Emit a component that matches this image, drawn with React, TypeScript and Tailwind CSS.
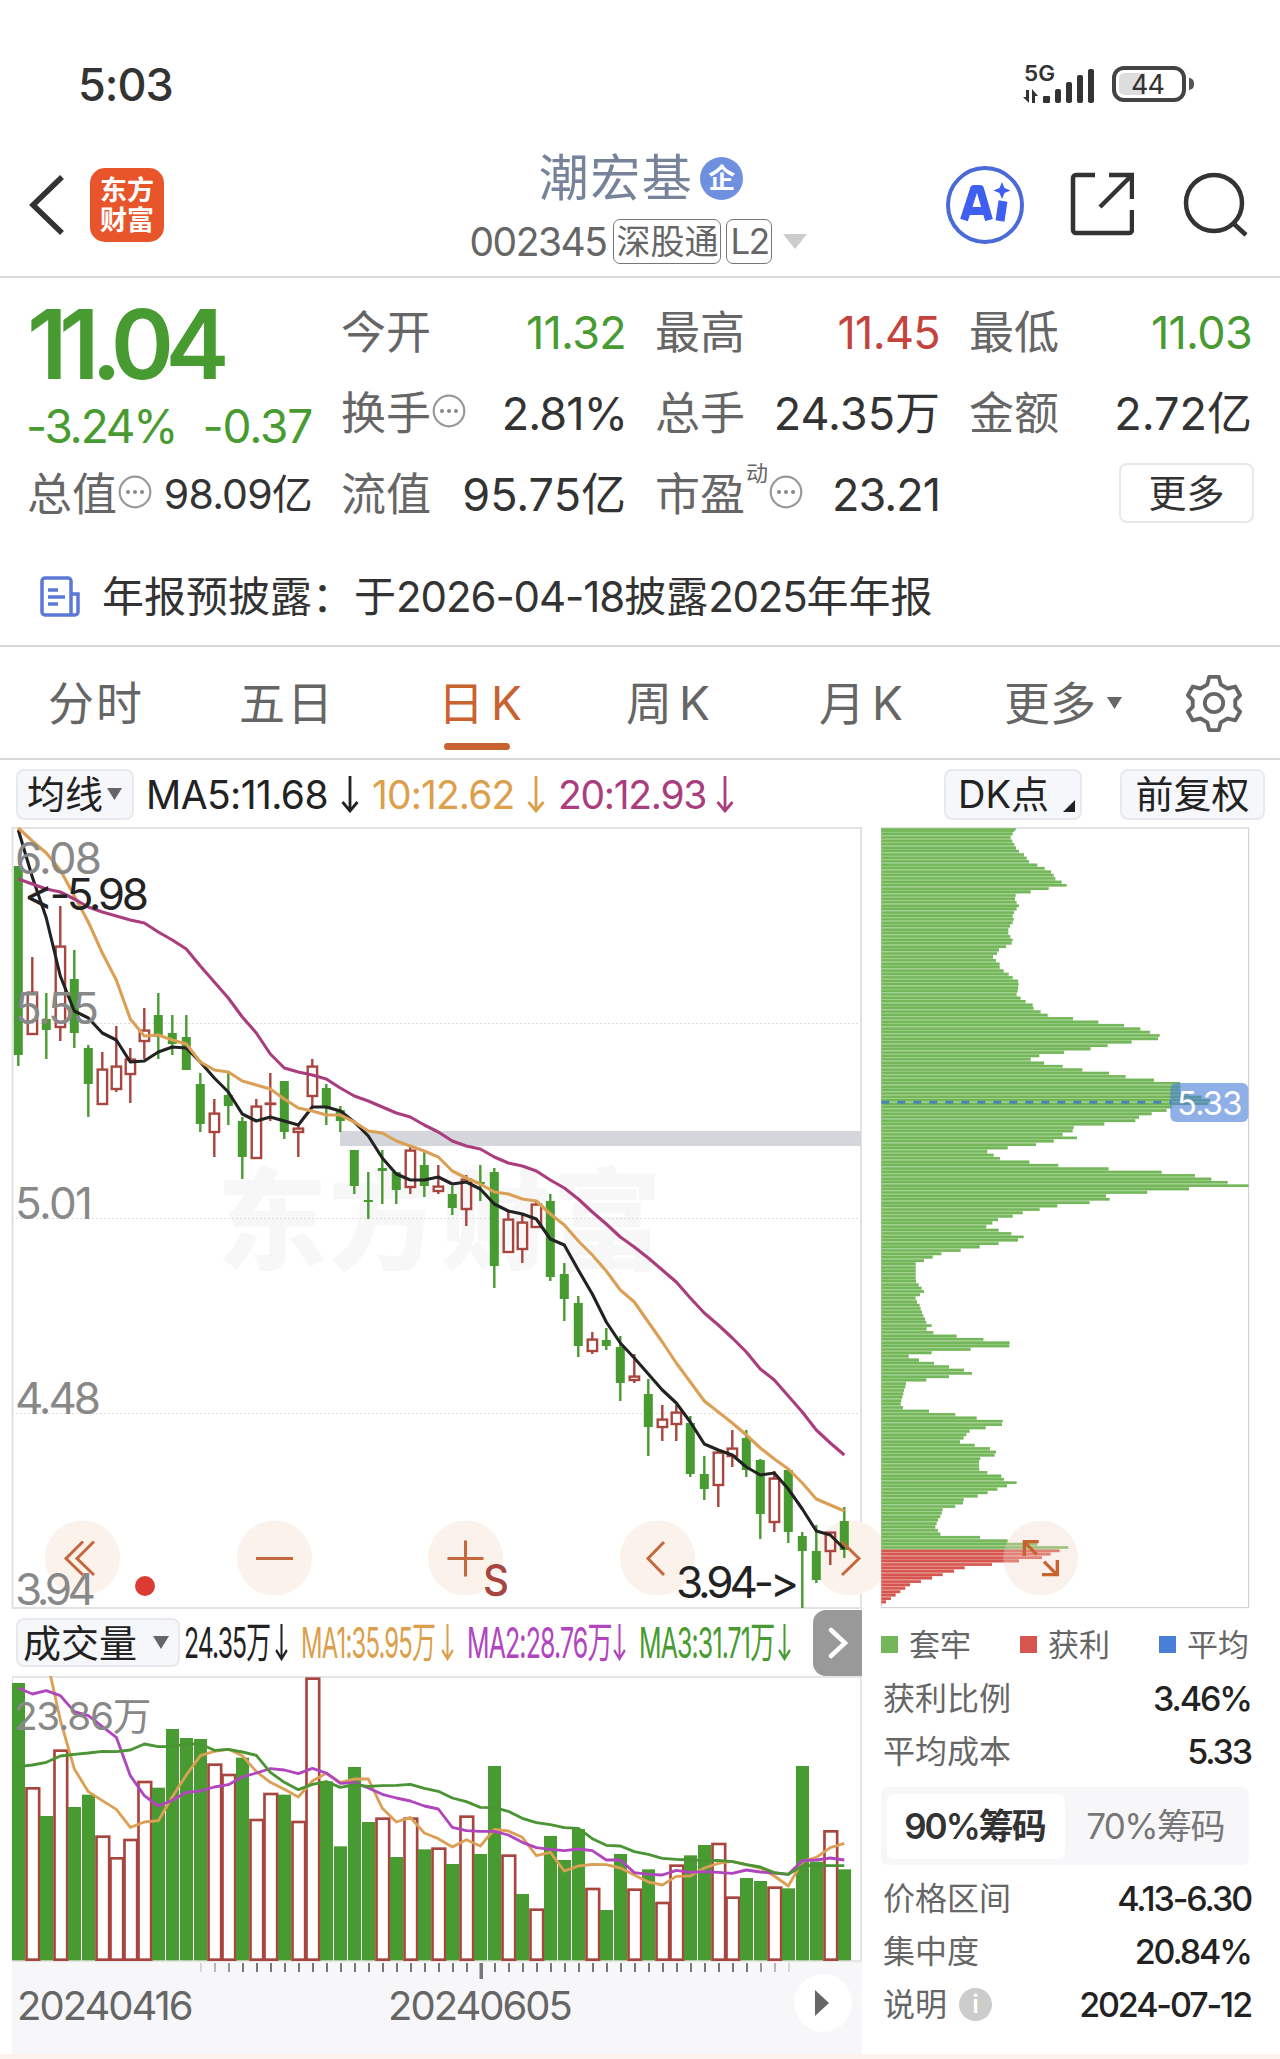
import type { ReactNode } from 'react';

const GREEN = '#489b31';
const RED = '#a8453f';

// [up, high, bodyTop, bodyBottom, low]
type Candle = [number, number, number, number, number];

const CANDLES: Candle[] = [
  [0, 866, 866, 1055, 1066], [1, 957, 992, 1034, 1034], [0, 993, 1019, 1030, 1059],
  [1, 906, 946, 1027, 1041], [0, 950, 979, 1033, 1048], [0, 1045, 1048, 1084, 1117],
  [1, 1052, 1069, 1104, 1104], [1, 1026, 1066, 1089, 1092], [1, 1048, 1059, 1074, 1103],
  [1, 1008, 1030, 1041, 1059], [0, 993, 1015, 1037, 1059], [0, 1015, 1033, 1044, 1055],
  [0, 1015, 1037, 1070, 1070], [0, 1073, 1084, 1124, 1132], [1, 1099, 1113, 1132, 1157],
  [0, 1072, 1095, 1106, 1125], [0, 1117, 1121, 1157, 1179], [1, 1099, 1106, 1158, 1158],
  [1, 1073, 1103, 1103, 1121], [0, 1081, 1081, 1132, 1139], [1, 1125, 1128, 1132, 1157],
  [1, 1059, 1066, 1096, 1107], [0, 1084, 1088, 1107, 1125], [0, 1106, 1110, 1121, 1132],
  [0, 1150, 1150, 1186, 1194], [0, 1172, 1200, 1202, 1219], [0, 1150, 1168, 1171, 1204],
  [0, 1172, 1172, 1190, 1204], [1, 1147, 1150, 1187, 1194], [0, 1152, 1165, 1186, 1197],
  [1, 1165, 1186, 1191, 1194], [0, 1186, 1194, 1208, 1215], [1, 1175, 1179, 1209, 1226],
  [0, 1165, 1182, 1184, 1201], [0, 1168, 1172, 1266, 1288], [1, 1212, 1219, 1252, 1252],
  [1, 1215, 1222, 1249, 1263], [1, 1201, 1204, 1227, 1227], [0, 1194, 1201, 1277, 1281],
  [0, 1263, 1274, 1299, 1321], [0, 1296, 1303, 1346, 1357], [1, 1332, 1339, 1351, 1354],
  [0, 1328, 1340, 1346, 1350], [0, 1336, 1347, 1383, 1401], [1, 1354, 1376, 1380, 1383],
  [0, 1379, 1394, 1427, 1456], [1, 1405, 1419, 1427, 1441], [1, 1405, 1412, 1424, 1441],
  [0, 1416, 1423, 1474, 1477], [0, 1456, 1474, 1489, 1500], [1, 1449, 1452, 1485, 1507],
  [1, 1430, 1448, 1456, 1467], [0, 1430, 1438, 1470, 1477], [0, 1459, 1460, 1514, 1539],
  [1, 1471, 1478, 1522, 1532], [0, 1468, 1470, 1532, 1543], [0, 1532, 1536, 1551, 1608],
  [0, 1525, 1551, 1580, 1583], [1, 1532, 1532, 1551, 1565], [0, 1507, 1521, 1550, 1558],
];

const MA5 = [
  830, 877, 918, 976, 1011, 1018, 1033, 1040, 1062, 1061, 1052, 1047, 1048, 1062, 1078, 1092, 1114,
  1121, 1117, 1121, 1125, 1107, 1107, 1111, 1122, 1136, 1158, 1174, 1180, 1180, 1177, 1184, 1182,
  1189, 1204, 1211, 1214, 1219, 1239, 1245, 1270, 1294, 1322, 1343, 1358, 1374, 1390, 1403, 1422,
  1444, 1450, 1455, 1467, 1475, 1473, 1489, 1509, 1531, 1535, 1549,
];
const MA10 = [
  828, 841, 853, 870, 896, 922, 953, 980, 1019, 1036, 1035, 1040, 1044, 1062, 1070, 1072, 1081,
  1085, 1089, 1099, 1108, 1111, 1115, 1115, 1122, 1131, 1133, 1141, 1146, 1151, 1157, 1171, 1178,
  1184, 1192, 1194, 1199, 1201, 1214, 1225, 1241, 1255, 1271, 1290, 1302, 1322, 1342, 1363, 1382,
  1401, 1412, 1423, 1435, 1448, 1459, 1469, 1483, 1499, 1505, 1511,
];
const MA20 = [
  879, 884, 889, 892, 899, 907, 912, 916, 920, 923, 932, 940, 949, 966, 982, 998, 1017, 1033, 1054,
  1068, 1072, 1075, 1079, 1088, 1096, 1101, 1107, 1113, 1117, 1125, 1132, 1141, 1146, 1149, 1157,
  1163, 1166, 1171, 1180, 1188, 1199, 1212, 1224, 1237, 1247, 1258, 1270, 1282, 1298, 1313, 1325,
  1338, 1352, 1369, 1380, 1396, 1412, 1430, 1443, 1455,
];

const VOLUME_TOPS = [
  189, 501, 588, 388, 561, 524, 646, 711, 656, 482, 503, 327, 354, 357, 430, 461, 413, 596, 518,
  524, 602, 172, 484, 679, 441, 606, 592, 711, 592, 688, 682, 732, 586, 702, 438, 703, 822, 865,
  648, 720, 627, 803, 870, 702, 805, 748, 845, 733, 706, 675, 668, 829, 774, 783, 799, 805, 438,
  725, 630, 748,
];
const VOLUME_UP = [
  1, 3, 6, 7, 8, 9, 14, 15, 17, 18, 20, 21, 26, 28, 30, 32, 35, 37, 41, 44, 46, 47, 50, 51, 54, 58,
];
const VOL_MA1 = [
  -300, -100, 110, 300, 447, 515, 542, 568, 622, 606, 602, 530, 465, 407, 394, 388, 407, 455, 487,
  508, 531, 483, 460, 487, 477, 477, 565, 606, 592, 639, 656, 681, 659, 678, 628, 633, 652, 707,
  697, 753, 738, 733, 734, 744, 765, 786, 795, 769, 768, 744, 730, 724, 734, 744, 768, 798, 725,
  712, 683, 670,
];
const VOL_MA2 = [
  204, 222, 212, 227, 275, 287, 320, 352, 467, 527, 558, 541, 517, 513, 501, 494, 471, 459, 446,
  450, 461, 445, 459, 490, 488, 504, 523, 534, 543, 558, 567, 622, 632, 634, 634, 645, 667, 683,
  688, 692, 687, 692, 720, 720, 758, 763, 765, 751, 757, 755, 757, 760, 750, 756, 759, 763, 722,
  720, 714, 720,
];
const VOL_MA3 = [
  440, 435, 427, 408, 403, 399, 394, 395, 390, 372, 380, 380, 372, 372, 391, 388, 396, 406, 457,
  487, 509, 493, 485, 502, 494, 499, 497, 496, 493, 505, 514, 534, 545, 562, 563, 574, 595, 608,
  614, 623, 625, 656, 676, 678, 695, 703, 715, 718, 720, 722, 721, 725, 734, 741, 758, 763, 738,
  736, 737, 737,
];

// right edge of every price level, from the highest price down
const CHIP_LEFT = 34;
const CHIP_FIRST_PROFIT = 212;
const CHIPS = [
  437, 432, 428, 422, 427, 433, 438, 447, 462, 470, 477, 502, 524, 543, 551, 556, 575, 590, 536,
  482, 437, 435, 440, 447, 440, 432, 428, 431, 428, 420, 415, 415, 421, 428, 425, 408, 387, 381,
  369, 378, 389, 389, 401, 416, 428, 444, 446, 444, 443, 440, 452, 467, 488, 491, 512, 533, 609,
  685, 762, 811, 840, 869, 864, 785, 713, 662, 582, 508, 482, 522, 578, 637, 717, 767, 852, 931,
  931, 931, 957, 995, 1020, 1015, 905, 890, 845, 807, 796, 703, 611, 608, 578, 621, 551, 498, 413,
  352, 371, 390, 478, 565, 716, 875, 975, 1024, 1073, 1136, 957, 832, 708, 719, 659, 562, 509, 458,
  428, 384, 367, 349, 386, 424, 461, 444, 386, 329, 272, 214, 188, 162, 137, 137, 137, 137, 137,
  138, 146, 155, 162, 150, 137, 141, 149, 152, 156, 160, 165, 169, 185, 170, 190, 260, 340, 419,
  418, 302, 185, 116, 147, 192, 237, 282, 306, 237, 169, 108, 106, 102, 100, 97, 94, 92, 99, 177,
  256, 320, 398, 396, 347, 299, 289, 281, 270, 314, 360, 378, 374, 331, 327, 327, 328, 352, 394,
  402, 440, 411, 382, 353, 323, 281, 279, 256, 218, 215, 211, 204, 200, 196, 204, 211, 330, 413,
  502, 595, 569, 542, 516, 447, 366, 284, 252, 218, 186, 153, 120, 106, 91, 77, 63, 48,
];

const priceX = (i: number) => 18.3 + 14 * i;
const volumeX = (i: number) => 55 + 42 * i;

const toPoints = (values: number[], x: (i: number) => number) =>
  values.map((y, i) => `${x(i)},${y}`).join(' ');

const Triangle = ({ className }: { className: string }) => (
  <svg viewBox="0 0 16 12" preserveAspectRatio="none" className={className}>
    <path d="M0 0h16L8 12z" fill="currentColor" />
  </svg>
);

const ArrowDown = ({ className = 'w-[18px]' }: { className?: string }) => (
  <svg
    viewBox="0 0 18 37"
    preserveAspectRatio="none"
    className={`h-[37px] shrink-0 ${className}`}
    fill="none"
    stroke="currentColor"
    strokeWidth="2.8"
  >
    <path d="M9 0v34M1.5 26 9 35l7.5-9" />
  </svg>
);

const MoreDots = () => (
  <svg viewBox="0 0 34 34" className="-mt-[6px] ml-px h-[34px] w-[34px] shrink-0">
    <circle cx="17" cy="17" r="15.3" fill="none" stroke="#999" strokeWidth="2.2" />
    <circle cx="10" cy="17" r="2" fill="#888" />
    <circle cx="17" cy="17" r="2" fill="#888" />
    <circle cx="24" cy="17" r="2" fill="#888" />
  </svg>
);

const StatusBar = () => (
  <div className="flex h-[140px] items-start justify-between pl-[78px] pr-[86px] text-[#333]">
    <div className="mt-[62px] text-[45px] font-medium tracking-[-1px]">5:03</div>
    <div className="mt-[63px] flex items-center">
      <svg viewBox="0 0 72 42" className="h-[42px] w-[72px] overflow-visible" fill="#333">
        <text x="1" y="18" fontSize="22" fontWeight="600" textLength="31" lengthAdjust="spacingAndGlyphs">
          5G
        </text>
        <path d="M3 27h3v13L0 34h3zM9 40h3V33l3 0-6-7z" />
        <rect x="20" y="33" width="7" height="7" rx="1" />
        <rect x="32" y="26" width="6" height="14" rx="2" />
        <rect x="43" y="19" width="6" height="21" rx="2" />
        <rect x="54" y="12" width="6" height="28" rx="2" />
        <rect x="65" y="6" width="6" height="34" rx="2" />
      </svg>
      <div className="ml-[17px] flex h-[36px] w-[74px] items-center rounded-[12px] border-[4px] border-[#444] p-[3px]">
        <div className="flex h-full w-[26px] items-center rounded-l-[5px] bg-[#ddd] pl-[12px] text-[27px] tracking-[-1px]">
          44
        </div>
      </div>
      <div className="ml-[3px] h-[12px] w-[5px] rounded-r-full bg-[#555]" />
    </div>
  </div>
);

const Header = () => (
  <div className="flex h-[138px] justify-between border-b-2 border-[#d8d8d8] pl-[28px] pr-[31px]">
    <div className="flex w-[400px] pt-[28px]">
      <svg viewBox="0 0 38 60" className="mt-[7px] h-[60px] w-[38px]" fill="none" stroke="#333" strokeWidth="5.5">
        <path d="M34 2 5 30l29 28" />
      </svg>
      <div className="ml-[24px] flex h-[74px] w-[74px] flex-col items-center justify-center gap-[3px] rounded-[15px] bg-[#e8552b] text-[27px] font-bold text-white">
        <span>东方</span>
        <span>财富</span>
      </div>
    </div>
    <div className="flex flex-col items-center pt-[13px]">
      <div className="flex items-center pl-[5px] text-[50px] tracking-[1.500px] text-[#76839a]">
        潮宏基
        <span className="ml-[7px] flex h-[43px] w-[43px] items-center justify-center rounded-full bg-[#6f8fdf] text-[27px] font-bold tracking-normal text-white">
          企
        </span>
      </div>
      <div className="mt-[16px] flex items-center text-[39px] text-[#666]">
        <span className="mr-[7px] tracking-[-1.500px]">002345</span>
        <span className="flex h-[45px] w-[108px] items-center justify-center rounded-[7px] border-[1.5px] border-[#777] text-[34px]">
          深股通
        </span>
        <span className="ml-[5px] flex h-[45px] w-[46px] items-center justify-center rounded-[7px] border-[1.5px] border-[#777] text-[35px] tracking-[-1.500px]">
          L2
        </span>
        <Triangle className="ml-[11px] h-[15px] w-[24px] text-[#ccc]" />
      </div>
    </div>
    <div className="flex w-[400px] justify-end pt-[25px]">
      <svg viewBox="0 0 80 80" className="h-[80px] w-[80px]">
        <circle cx="40" cy="40" r="37" fill="none" stroke="#4a6ad8" strokeWidth="4" />
        <path
          d="M19 55 29 24h6l9 31M22 46h17"
          fill="none"
          stroke="#3f5ff0"
          strokeWidth="8"
          strokeLinejoin="round"
        />
        <path d="M58 36l-3 20" stroke="#3f5ff0" strokeWidth="9" />
        <path d="m57 17 2.500 6 6 2.500-6 2.500-2.500 6-2.500-6-6-2.500 6-2.500z" fill="#3f5ff0" />
      </svg>
      <svg viewBox="0 0 64 64" className="ml-[45px] mt-[7px] h-[64px] w-[64px]" fill="none" stroke="#333" strokeWidth="4.5">
        <path d="M25 3H6a3 3 0 0 0-3 3v52a3 3 0 0 0 3 3h53a3 3 0 0 0 3-3V38" />
        <path d="M39 3h23v24M61 4 30 35" />
      </svg>
      <svg viewBox="0 0 66 66" className="ml-[49px] mt-[7px] h-[66px] w-[66px]" fill="none" stroke="#333" strokeWidth="4.5">
        <circle cx="31" cy="31" r="28" />
        <path d="m50 51 13 12" />
      </svg>
    </div>
  </div>
);

interface QuoteItemProps {
  label: ReactNode;
  value: string;
  className?: string;
}

const QuoteItem = ({ label, value, className = 'text-[#333]' }: QuoteItemProps) => (
  <div className="flex items-center justify-between whitespace-nowrap">
    <div className="flex items-center text-[45px] text-[#666]">{label}</div>
    <div className={`text-[45px] ${className}`}>{value}</div>
  </div>
);

const Quote = () => (
  <div className="grid h-[256px] grid-cols-[285px_285px_285px_283px] grid-rows-[81px_81px_81px] gap-x-[29px] pl-[27px] pt-[14px]">
    <div className="row-span-2 whitespace-nowrap text-[#489b31]">
      <div className="mt-[4px] text-[96px] font-semibold tracking-[-8.500px]">11.04</div>
      <div className="-ml-px mt-[11px] flex justify-between text-[46px] tracking-[-2.200px]">
        <span>-3.24%</span>
        <span className="tracking-[-1.200px]">-0.37</span>
      </div>
    </div>
    <QuoteItem label="今开" value="11.32" className="tracking-[-0.700px] text-[#489b31]" />
    <QuoteItem label="最高" value="11.45" className="tracking-[-0.700px] text-[#c4433c]" />
    <QuoteItem label="最低" value="11.03" className="tracking-[-0.700px] text-[#489b31]" />
    <QuoteItem label={<>换手<MoreDots /></>} value="2.81%" className="-mr-px tracking-[-0.900px] text-[#333]" />
    <QuoteItem label="总手" value="24.35万" />
    <QuoteItem label="金额" value="2.72亿" />
    <div className="flex items-center justify-between whitespace-nowrap">
      <div className="flex items-center text-[45px] text-[#666]">
        总值
        <MoreDots />
      </div>
      <div className="text-[41px] tracking-[-0.800px] text-[#333]">98.09亿</div>
    </div>
    <QuoteItem label="流值" value="95.75亿" />
    <QuoteItem
      label={
        <>
          市盈
          <span className="-mt-[44px] ml-px text-[22px]">动</span>
          <MoreDots />
        </>
      }
      value="23.21"
      className="tracking-[-1px] text-[#333]"
    />
    <div className="flex items-center justify-end">
      <div className="-mr-[2px] -mt-[4px] flex h-[60px] w-[135px] items-center justify-center rounded-[8px] border-2 border-[#e8e8e8] text-[38px] text-[#333]">
        更多
      </div>
    </div>
  </div>
);

const Notice = () => (
  <div className="flex h-[113px] items-center whitespace-nowrap border-b-2 border-[#d8d8d8] pl-[40px] pt-[15px] text-[42px] text-[#333]">
    <svg viewBox="0 0 40 42" className="mr-[22px] h-[42px] w-[40px]" fill="none" stroke="#5b78d6" strokeWidth="3.5">
      <path d="M31 38V5a3 3 0 0 0-3-3H5a3 3 0 0 0-3 3v31a3 3 0 0 0 3 3h30a3 3 0 0 0 3-3V18h-7" />
      <path d="M8 14h10M8 21h17M8 28h10" />
    </svg>
    年报预披露：于
    <span className="tracking-[-1.100px]">2026-04-18</span>
    披露
    <span className="tracking-[-1.200px]">2025</span>
    年年报
  </div>
);

const TABS = [
  { label: '分时', width: 'w-[191px]', tracking: 'tracking-[2px]' },
  { label: '五日', width: 'w-[199px]', tracking: 'tracking-[2px]' },
  { label: '日K', width: 'w-[188px]', tracking: 'tracking-[7px]', active: true },
  { label: '周K', width: 'w-[193px]', tracking: 'tracking-[7px]' },
  { label: '月K', width: 'w-[185px]', tracking: 'tracking-[7px]' },
];

const Tabs = () => (
  <div className="flex h-[113px] border-b-2 border-[#d8d8d8] pl-[48px] pt-[33px] text-[46px] text-[#666]">
    {TABS.map(({ label, width, tracking, active }) => (
      <div key={label} className={`${width} shrink-0`}>
        <div className={`inline-flex flex-col items-center ${tracking} ${active ? 'text-[#c8622f]' : ''}`}>
          {label}
          {active && <div className="mr-[12px] mt-[17px] h-[7px] w-[66px] rounded-full bg-[#c8622f]" />}
        </div>
      </div>
    ))}
    <div className="flex h-[46px] items-center">
      更多
      <Triangle className="ml-[11px] h-[12px] w-[15px]" />
    </div>
    <svg viewBox="0 0 60 60" className="-mt-[6px] ml-[62px] h-[58px] w-[60px]" fill="none" stroke="#666" strokeWidth="4">
      <path
        d="M25 3h10l2 8 7 4 8-2 5 9-5 5v7l5 5-5 9-8-2-7 4-2 8H25l-2-8-7-4-8 2-5-9 5-5v-7l-5-5 5-9 8 2 7-4z"
        strokeLinejoin="round"
      />
      <circle cx="30" cy="30" r="9.5" />
    </svg>
  </div>
);

const pill = 'flex items-center rounded-[8px] border-2 border-[#e8e9ec] bg-[#f6f7fa] text-[#222]';

const AverageBar = () => (
  <div className="flex h-[68px] items-center pl-[16px] pr-[15px] text-[39px] tracking-[-0.900px]">
    <div className={`${pill} h-[51px] w-[118px] pl-[9px] text-[38px] tracking-normal`}>
      均线
      <Triangle className="ml-[4px] h-[12px] w-[15px] text-[#666]" />
    </div>
    <div className="ml-[12px] flex w-[226px] items-center justify-between pr-[13px] tracking-[-0.600px] text-[#222]">
      MA5:11.68
      <ArrowDown />
    </div>
    <div className="flex w-[186px] items-center justify-between pr-[13px] text-[#dc9f4c]">
      10:12.62
      <ArrowDown />
    </div>
    <div className="flex w-[176px] items-center justify-between tracking-[-1.300px] text-[#a93d7e]">
      20:12.93
      <ArrowDown />
    </div>
    <div className={`${pill} relative ml-auto h-[51px] w-[138px] pl-[12px] text-[38px] tracking-normal`}>
      DK点
      <svg viewBox="0 0 12 12" className="absolute bottom-[6px] right-[5px] h-[12px] w-[12px]">
        <path d="M12 0v12H0z" fill="#222" />
      </svg>
    </div>
    <div className={`${pill} ml-[38px] h-[51px] w-[145px] justify-center text-[38px] tracking-normal`}>前复权</div>
  </div>
);

const PRICE_LABELS = [
  { text: '6.08', y: 874, width: 87 },
  { text: '5.55', y: 1024, width: 84 },
  { text: '5.01', y: 1219, width: 78 },
  { text: '4.48', y: 1414, width: 86 },
  { text: '3.94', y: 1605, width: 81 },
];

const CONTROLS = [
  { cx: 82.5, d: 'M83 1541.500 66 1558.500 83 1575M94 1541.500 77 1558.500 94 1575' },
  { cx: 274.5, d: 'M256 1558.500h37' },
  { cx: 465.5, d: 'M447.500 1558.500h36M465.500 1540.500v36' },
  { cx: 657.5, d: 'M664 1542 648 1558.500 664 1575' },
  { cx: 850.5, d: 'M842 1542 859 1558.500 842 1575' },
];

const PriceChart = () => (
  <svg
    viewBox="12 827 850 782"
    className="h-[782px] w-[850px] shrink-0 overflow-visible [font-feature-settings:'calt'_0]"
  >
    <rect x="12.500" y="828" width="848.500" height="780" fill="none" stroke="#e2e2e2" strokeWidth="2" />
    <text
      x="217"
      y="1261"
      fontSize="110"
      fontWeight="900"
      fill="#f7f7f7"
      textLength="445"
    >
      东方财富
    </text>
    {[1023.5, 1218.5, 1413.5].map((y) => (
      <line key={y} x1="12" x2="861" y1={y} y2={y} stroke="#ddd" strokeDasharray="2 2" />
    ))}
    {CONTROLS.map(({ cx }) => (
      <circle key={cx} cx={cx} cy="1558" r="37.500" fill="#fbf2ec" />
    ))}
    <rect x="340" y="1131" width="521" height="15" fill="#d5d6db" />
    {CANDLES.map(([up, high, top, bottom, low], i) => {
      const x = priceX(i);
      return up ? (
        <g key={i} fill="none" stroke={RED} strokeWidth="2.4">
          <path d={`M${x} ${high}V${top}M${x} ${bottom}V${low}`} />
          <rect x={x - 4.6} y={top + 0.6} width="9.400" height={Math.max(bottom - top - 0.6, 0.4)} />
        </g>
      ) : (
        <g key={i} fill={GREEN}>
          <rect x={x - 1.2} y={high} width="2.400" height={low - high} />
          <rect x={x - 4.5} y={top} width="9" height={bottom - top} />
        </g>
      );
    })}
    <g fill="none" strokeWidth="3.100" strokeLinejoin="round">
      <polyline points={toPoints(MA5, priceX)} stroke="#222" />
      <polyline points={toPoints(MA10, priceX)} stroke="#dba055" />
      <polyline points={toPoints(MA20, priceX)} stroke="#a93d7e" />
    </g>
    {CONTROLS.map(({ cx, d }) => (
      <path key={cx} d={d} fill="none" stroke="#c4693d" strokeWidth="3" />
    ))}
    <g fontSize="44" fill="#888">
      {PRICE_LABELS.map(({ text, y, width }) => (
        <text key={text} x="15" y={y} textLength={width}>
          {text}
        </text>
      ))}
    </g>
    <g fontSize="44" fill="#222">
      <text x="24" y="910" textLength="125">
        {'<-5.98'}
      </text>
      <text x="676" y="1598" textLength="123">
        {'3.94->'}
      </text>
    </g>
    <text x="483" y="1596" fontSize="44" fontWeight="500" fill={RED} textLength="26" lengthAdjust="spacingAndGlyphs">
      S
    </text>
    <circle cx="145" cy="1586" r="10" fill="#dc3b34" />
  </svg>
);

const ChipChart = () => (
  <svg viewBox="30 22 1110 2346" className="relative ml-[18px] h-[782px] w-[370px] shrink-0">
    <rect x="34" y="25" width="1102" height="2339" fill="#fff" stroke="#ccc" strokeWidth="3" />
    {CHIPS.map((right, i) => {
      const profit = i >= CHIP_FIRST_PROFIT;
      return (
        <g key={i} fill={profit ? '#d4564f' : '#74b65a'}>
          <rect x={CHIP_LEFT} y={Math.max(18.8 + 10.24 * i, 25)} width={right - CHIP_LEFT} height="8" />
          <rect
            x={CHIP_LEFT}
            y={26.5 + 10.24 * i}
            width={Math.max(Math.min(right, CHIPS[i + 1] ?? 0) - CHIP_LEFT, 0)}
            height="3"
            fill={profit ? '#e8837c' : '#93cc7c'}
          />
        </g>
      );
    })}
    <line x1="34" x2="905" y1="848" y2="848" stroke="#4a86b4" strokeWidth="9" strokeDasharray="24 24" />
    <rect x="901" y="790" width="234" height="117" rx="18" fill="#4a7fd8" fillOpacity="0.62" />
    <text x="921" y="885" fontSize="98" fill="#fff" textLength="196">
      5.33
    </text>
    <circle cx="512" cy="2215" r="112" fill="#f3d8c8" fillOpacity="0.35" />
    <path
      d="M506 2166h-43v43M464 2168l36 36M522 2226l38 38M516 2265h46v-44"
      fill="none"
      stroke="#c8622f"
      strokeWidth="10"
    />
  </svg>
);

const VOLUME_LEGEND = [
  { text: '24.35万', width: 'w-[91px]', gap: 'mr-[13px]', color: 'text-[#222]', scale: 'scale-x-[0.575]' },
  { text: 'MA1:35.95万', width: 'w-[140px]', gap: 'mr-[13px]', color: 'text-[#dc9f4c]', scale: 'scale-x-[0.555]' },
  { text: 'MA2:28.76万', width: 'w-[146px]', gap: 'mr-[13px]', color: 'text-[#b145bd]', scale: 'scale-x-[0.58]' },
  { text: 'MA3:31.71万', width: 'w-[139px]', gap: 'mr-0', color: 'text-[#489b31]', scale: 'scale-x-[0.58]' },
];

const VolumeHeader = () => (
  <div className="flex h-[67px] w-[850px] items-center pl-[4px]">
    <div className={`${pill} h-[49px] w-[164px] shrink-0 pl-[5px] text-[38px]`}>
      成交量
      <Triangle className="ml-[16px] h-[13px] w-[16px] text-[#666]" />
    </div>
    <div className="ml-[4px] flex text-[43px] tracking-[-1.500px]">
      {VOLUME_LEGEND.map(({ text, width, gap, color, scale }) => (
        <div key={text} className={`flex items-center ${color} ${gap}`}>
          <div className={`${width} shrink-0 whitespace-nowrap`}>
            <span className={`inline-block origin-left ${scale}`}>{text}</span>
          </div>
          <ArrowDown className="w-[13px]" />
        </div>
      ))}
    </div>
    <div className="relative ml-auto flex h-[66px] w-[49px] shrink-0 items-center justify-center rounded-l-[13px] bg-[#999]">
      <svg viewBox="0 0 20 32" className="h-[32px] w-[20px]" fill="none" stroke="#fff" strokeWidth="4.5" strokeLinecap="round">
        <path d="m3 3 14 13L3 29" />
      </svg>
    </div>
  </div>
);

const VolumeChart = () => (
  <svg viewBox="36 168 2550 858" className="block h-[286px] w-[850px]">
    <rect x="37" y="171" width="2546" height="852" fill="none" stroke="#e2e2e2" strokeWidth="5" />
    {VOLUME_TOPS.map((top, i) => {
      const x = volumeX(i);
      return VOLUME_UP.includes(i) ? (
        <rect
          key={i}
          x={x - 17.5}
          y={top + 4}
          width="38"
          height={1015 - top}
          fill="#fff"
          stroke={RED}
          strokeWidth="8"
        />
      ) : (
        <rect key={i} x={x - 19} y={top} width="39" height={1021 - top} fill={GREEN} />
      );
    })}
    <g fill="none" strokeWidth="8.5" strokeLinejoin="round">
      <polyline points={toPoints(VOL_MA1, volumeX)} stroke="#dba055" />
      <polyline points={toPoints(VOL_MA2, volumeX)} stroke="#b145bd" />
      <polyline points={toPoints(VOL_MA3, volumeX)} stroke="#4a9434" />
    </g>
    <text x="42" y="329" fontSize="116" fill="#888" textLength="412">
      23.86万
    </text>
  </svg>
);

const TICKS = Array.from({ length: 43 }, (_, n) => n + 13);

const TimeAxis = () => (
  <div className="h-[93px] w-[850px] bg-[#f7f7fa]">
    <svg viewBox="12 1962 850 18" className="block h-[18px] w-[850px]">
      {TICKS.map((i) => (
        <rect
          key={i}
          x={i === 33 ? 479.5 : 200 + 14 * (i - 13)}
          y="1963"
          width={i === 33 ? 3.5 : 2}
          height={i === 33 ? 16 : 9}
          fill="#777"
          opacity={Math.min(1, (i - 12) / 4, (56 - i) / 4)}
        />
      ))}
    </svg>
    <div className="flex items-center pl-[5px] text-[40px] text-[#666]">
      <span className="w-[371px] tracking-[-2px]">20240416</span>
      <span className="tracking-[-2px]">20240605</span>
      <div className="-mt-[6px] ml-auto mr-[10px] flex h-[58px] w-[58px] items-center justify-center rounded-full bg-white">
        <svg viewBox="0 0 14 26" className="ml-[-2px] h-[26px] w-[14px]">
          <path d="M0 0l14 13L0 26z" fill="#666" />
        </svg>
      </div>
    </div>
  </div>
);

const StatRow = ({ label, value }: { label: ReactNode; value: string }) => (
  <div className="flex h-[53px] items-center justify-between pl-[2px]">
    <div className="flex items-center text-[32px] text-[#666]">{label}</div>
    <div className="-mr-[2px] text-[34px] font-medium tracking-[-2.100px] text-[#222]">{value}</div>
  </div>
);

const LEGEND = [
  { label: '套牢', color: 'bg-[#74b65a]' },
  { label: '获利', color: 'bg-[#d4564f]' },
  { label: '平均', color: 'bg-[#4a7fd8]' },
];

const ChipStats = () => (
  <div className="ml-[19px] w-[368px] pt-[8px]">
    <div className="flex h-[55px] items-center justify-between pb-px text-[31px] text-[#666]">
      {LEGEND.map(({ label, color }) => (
        <div key={label} className="flex items-center gap-[11px]">
          <span className={`h-[17px] w-[17px] ${color}`} />
          {label}
        </div>
      ))}
    </div>
    <StatRow label="获利比例" value="3.46%" />
    <StatRow label="平均成本" value="5.33" />
    <div className="mb-[7px] mt-[9px] flex h-[78px] items-center rounded-[7px] bg-[#f7f7fa] p-[6px] text-[35px]">
      <div className="flex h-[65px] w-[178px] items-center justify-center rounded-[8px] bg-white pr-[3px] font-semibold tracking-[-2px] text-[#333]">
        90%筹码
      </div>
      <div className="flex flex-1 items-center justify-center pl-[2px] tracking-[-1.600px] text-[#777]">70%筹码</div>
    </div>
    <StatRow label="价格区间" value="4.13-6.30" />
    <StatRow label="集中度" value="20.84%" />
    <StatRow
      label={
        <>
          说明
          <span className="ml-[12px] flex h-[33px] w-[33px] items-center justify-center rounded-full bg-[#ccc] text-[25px] font-semibold text-white">
            i
          </span>
        </>
      }
      value="2024-07-12"
    />
  </div>
);

export default function App() {
  return (
    <div className="flex h-[2059px] w-[1280px] flex-col overflow-hidden bg-white font-['Inter','Noto_Sans_CJK_SC',sans-serif] leading-none">
      <StatusBar />
      <Header />
      <Quote />
      <Notice />
      <Tabs />
      <AverageBar />
      <div className="-mt-px flex pl-[12px]">
        <PriceChart />
        <ChipChart />
      </div>
      <div className="flex h-[445px] pl-[12px]">
        <div className="w-[850px] shrink-0">
          <VolumeHeader />
          <VolumeChart />
          <TimeAxis />
        </div>
        <ChipStats />
      </div>
      <div className="h-[5px] shrink-0 bg-[#fdf3ee]" />
    </div>
  );
}
